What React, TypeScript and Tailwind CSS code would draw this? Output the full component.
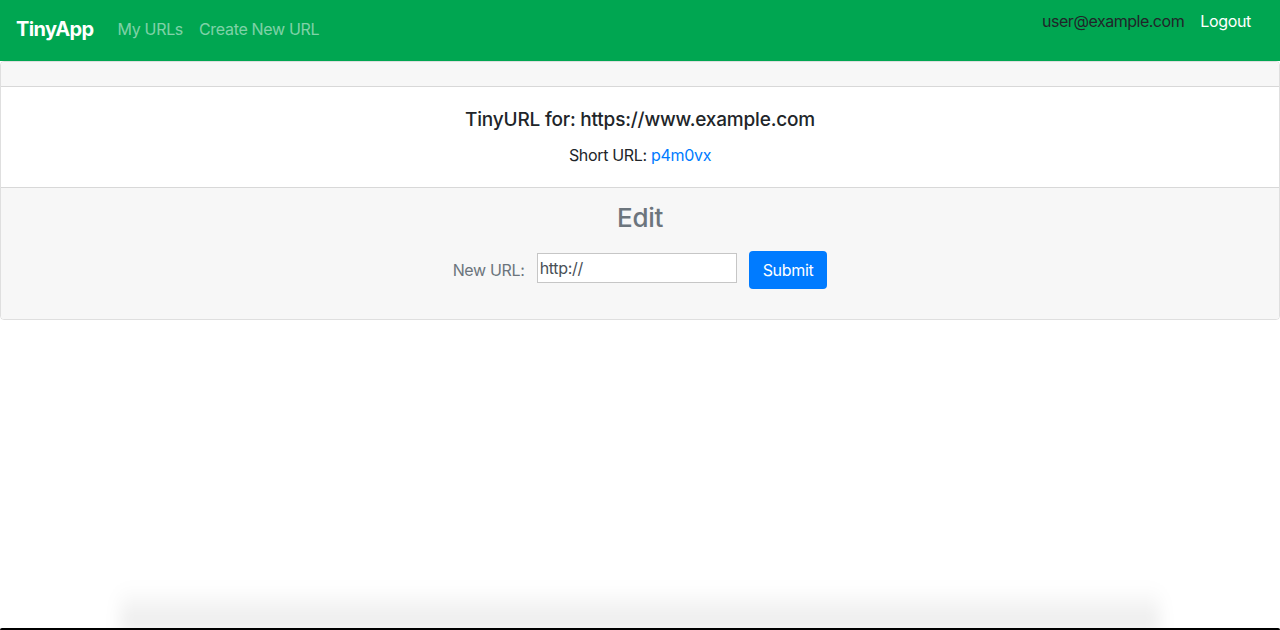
const App = () => {
  return (
    <div className="min-h-screen bg-white text-[#212529] font-['Inter','Liberation_Sans',sans-serif] text-[16px] tracking-[-0.02em]">
      <nav className="h-[61px] bg-[#00a651] flex justify-between pl-4 pr-[21px]">
        <div className="flex items-center pb-[3px]">
          <a className="text-white text-[20px] font-bold mr-4 tracking-[-0.03em]">TinyApp</a>
          <a className="px-2 text-white/50">My URLs</a>
          <a className="px-2 text-white/50">Create New URL</a>
        </div>
        <div className="flex items-start pt-[9px]">
          <span className="px-2 text-[#212529] tracking-[-0.03em]">user@example.com</span>
          <a className="px-2 text-white">Logout</a>
        </div>
      </nav>

      <div className="border border-black/[0.125] rounded-[4px] overflow-hidden">
        <div className="h-[25px] bg-[#f7f7f7] border-b border-black/[0.125]"></div>
        <div className="text-center pt-[22px] pb-[20px]">
          <h5 className="text-[19px] font-medium leading-[1.2] mb-[11px] tracking-[-0.01em]">
            TinyURL for: https://www.example.com
          </h5>
          <p>
            Short URL: <a className="text-[#007bff]">p4m0vx</a>
          </p>
        </div>
        <div className="bg-[#f7f7f7] border-t border-black/[0.125] pt-[14px] pb-[30px] text-center">
          <h3 className="text-[26px] font-medium text-[#6c757d] leading-[1.2] mb-[18px]">Edit</h3>
          <form className="flex justify-center items-center gap-3">
            <label className="text-[#6c757d]">New URL:</label>
            <input
              className="w-[200px] h-[30px] mb-[4px] bg-white border border-[#c6c6c6] px-[2px] text-[16px] text-[#495057] outline-none"
              defaultValue="http://"
            />
            <button
              type="button"
              className="bg-[#007bff] text-white rounded-[4px] px-[14px] h-[38px]"
            >
              Submit
            </button>
          </form>
        </div>
      </div>

      <div className="fixed bottom-0 left-0 right-0 h-[44px] pointer-events-none">
        <div className="mx-[120px] h-full bg-gradient-to-b from-transparent to-black/[0.09] blur-[8px]"></div>
        <div className="absolute bottom-0 left-0 right-0 h-[2px] bg-black rounded-t-[4px]"></div>
      </div>
    </div>
  );
};

export default App;
